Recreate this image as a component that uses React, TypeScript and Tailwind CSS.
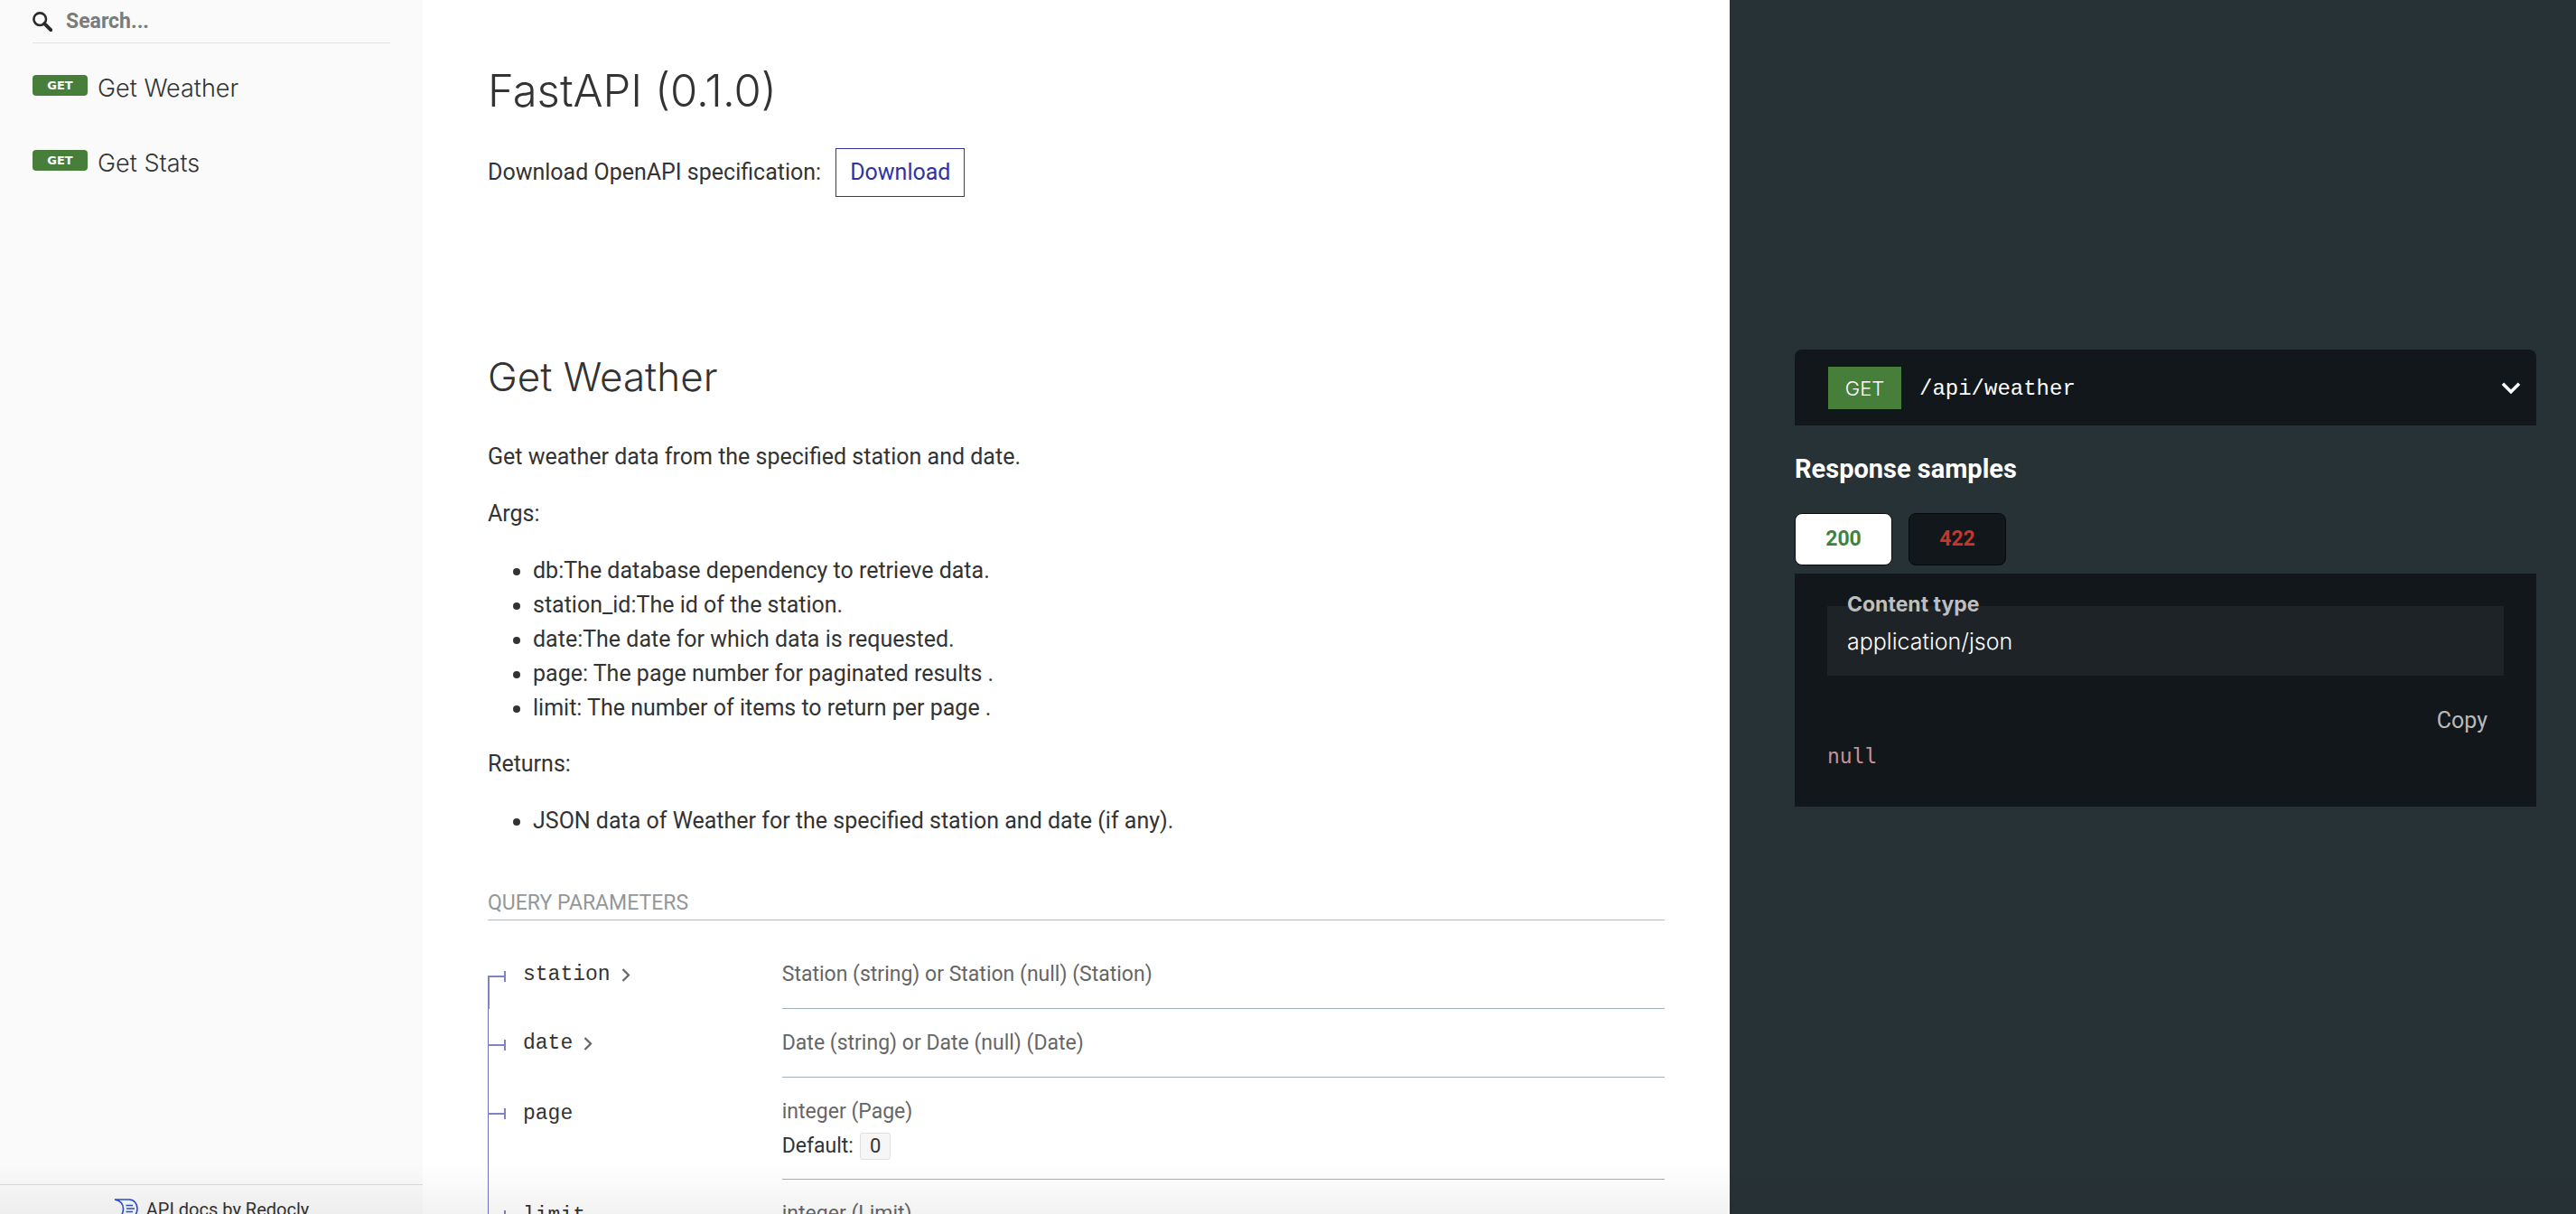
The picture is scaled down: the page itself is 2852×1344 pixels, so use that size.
import type { ReactNode } from "react";

const operations = ["Get Weather", "Get Stats"];

const args = [
  "db:The database dependency to retrieve data.",
  "station_id:The id of the station.",
  "date:The date for which data is requested.",
  "page: The page number for paginated results .",
  "limit: The number of items to return per page .",
];

type Param = { name: string; type: string; expandable?: boolean; value?: string };

const params: Param[] = [
  { name: "station", type: "Station (string) or Station (null) (Station)", expandable: true },
  { name: "date", type: "Date (string) or Date (null) (Date)", expandable: true },
  { name: "page", type: "integer (Page)", value: "0" },
  { name: "limit", type: "integer (Limit)", value: "100" },
];

function SearchIcon() {
  return (
    <svg viewBox="0 0 22 22" className="size-[22px] shrink-0" fill="none" stroke="#2b2b2b" aria-hidden="true">
      <circle cx="8.2" cy="8.2" r="6.8" strokeWidth="2.6" />
      <path d="M13.2 13.2 20.2 20.2" strokeWidth="4" strokeLinecap="round" />
    </svg>
  );
}

function RedoclyLogo() {
  return (
    <svg viewBox="0 0 27 24" className="h-6 w-[27px] shrink-0" fill="none" stroke="#2b4fd6" strokeWidth="1.6" aria-hidden="true">
      <path d="M1 1H17C22.500 1 26 5.500 26 11S22.500 22 17 22H4C8 20 10.500 16 10.500 11.500 10.500 6 7 2 1 1Z" />
      <path d="M13.500 7.500H21M14 11H23M13.500 14.500H21" />
    </svg>
  );
}

function Sidebar() {
  return (
    <aside className="flex min-h-0 flex-col bg-[#fafafa]">
      <label className="mx-9 flex h-12 items-center gap-[15px] border-b border-[#e1e1e1]">
        <SearchIcon />
        <input
          type="text"
          aria-label="Search"
          placeholder="Search..."
          className="min-w-0 flex-1 bg-transparent pt-[2px] text-[23px] font-bold text-[#333] outline-none placeholder:text-[#7b7b7b] placeholder:opacity-100"
        />
      </label>
      <nav className="flex flex-col gap-[45px] px-9 pt-[35px]">
        {operations.map((name) => (
          <a key={name} href="#operation" className="flex h-[38px] items-start gap-[11px] text-[#333]">
            <span className="flex h-[23px] w-[61px] shrink-0 items-center justify-center rounded bg-[#477f3a] font-['DejaVu_Sans',sans-serif] text-[13px] font-bold text-white">
              GET
            </span>
            <span className="font-[Inter,sans-serif] text-[27px] leading-[30px] font-light">{name}</span>
          </a>
        ))}
      </nav>
      <footer className="mt-auto h-[33px] overflow-hidden border-t border-[#dcdcdc] pt-[15px]">
        <a href="#redocly" className="flex items-start justify-center gap-[9px] text-[20px] leading-6 text-[#333]">
          <RedoclyLogo />
          API docs by Redocly
        </a>
      </footer>
    </aside>
  );
}

function Bullets({ items }: { items: string[] }) {
  return (
    <ul className="mb-6 list-disc pl-[50px]">
      {items.map((item) => (
        <li key={item}>{item}</li>
      ))}
    </ul>
  );
}

function Chevron({ className, children }: { className: string; children: ReactNode }) {
  return (
    <svg viewBox="0 0 20 20" className={className} fill="none" stroke="currentColor" aria-hidden="true">
      {children}
    </svg>
  );
}

function ParamRow({ param, first }: { param: Param; first: boolean }) {
  return (
    <tr className="align-top">
      <th scope="row" className="relative w-1/4 pt-[19px] pl-[39px] text-left font-normal">
        <span className={first ? "absolute top-[39px] bottom-0 left-0 w-[2px] bg-[#8182c1]" : "absolute inset-y-0 left-0 w-px bg-[#7375ba]"} />
        <span className="absolute top-[39px] left-0 h-[2px] w-[20px] bg-[#8182c1]" />
        <span className="absolute top-[34px] left-[18px] h-3 w-[2px] bg-[#8182c1]" />
        {param.expandable ? (
          <button type="button" className="flex items-center gap-2 font-['Liberation_Mono',monospace] text-[23px] leading-[38px] text-[#333]">
            {param.name}
            <Chevron className="size-[20px] text-[#666]">
              <path d="M5.500 4 12 10.500 5.500 17" strokeWidth="2.2" />
            </Chevron>
          </button>
        ) : (
          <span className="font-['Liberation_Mono',monospace] text-[23px] leading-[38px] text-[#333]">{param.name}</span>
        )}
      </th>
      <td className="border-b border-[#9fb1be] pt-[19px] pb-[18px] text-[23px] leading-[38px]">
        <div className="text-[#666]">{param.type}</div>
        {param.value && (
          <div className="flex h-[37px] items-center gap-[7px]">
            Default:
            <span className="flex h-[30px] items-center rounded-[3px] border border-[#e0e0e0] bg-[#f6f6f6] px-[10px] text-[22px]">
              {param.value}
            </span>
          </div>
        )}
      </td>
    </tr>
  );
}

function Content() {
  return (
    <main className="min-h-0 overflow-hidden bg-white px-[72px] text-[25px] leading-[38px] text-[#333]">
      <h1 className="pt-[70px] font-[Inter,sans-serif] text-[49px] leading-[62px] font-light">FastAPI (0.1.0)</h1>
      <p className="mt-8 flex items-center gap-4">
        Download OpenAPI specification:
        <a href="#openapi.json" className="border border-[#32329f] px-[15px] py-[7px] text-[#32329f]">
          Download
        </a>
      </p>
      <h2 className="mt-[171px] font-[Inter,sans-serif] text-[44px] leading-[56px] font-light">Get Weather</h2>
      <p className="mt-[42px] mb-[25px]">Get weather data from the specified station and date.</p>
      <p className="mb-[25px]">Args:</p>
      <Bullets items={args} />
      <p className="mb-[25px]">Returns:</p>
      <Bullets items={["JSON data of Weather for the specified station and date (if any)."]} />
      <h5 className="mt-[54px] border-b border-[#b9bdbf] text-[23px] leading-[36px] text-[#939799] uppercase">
        Query Parameters
      </h5>
      <table className="mt-[22px] w-full border-separate border-spacing-0">
        <tbody>
          {params.map((param, i) => (
            <ParamRow key={param.name} param={param} first={i === 0} />
          ))}
        </tbody>
      </table>
    </main>
  );
}

function Samples() {
  return (
    <section className="min-h-0 overflow-hidden bg-[#273237] pt-[387px] pr-11 pl-[72px] text-white">
      <button type="button" className="flex h-[84px] w-full items-center rounded-t-lg bg-[#11171a] pr-4 pl-[37px] text-left">
        <span className="flex h-[47px] w-[81px] items-center justify-center bg-[#477f3a] pt-[2px] font-[Inter,sans-serif] text-[22px] font-light">
          GET
        </span>
        <span className="ml-5 flex-1 pt-1 font-['Liberation_Mono',monospace] text-[24px]">/api/weather</span>
        <Chevron className="size-6">
          <path d="M2.500 6.500 10 14 17.500 6.500" strokeWidth="3" />
        </Chevron>
      </button>
      <h3 className="mt-7 text-[29px] leading-10 font-bold">Response samples</h3>
      <div role="tablist" className="mt-[29px] flex gap-[18px] text-[23px] font-bold">
        <button type="button" role="tab" aria-selected="true" className="h-[58px] w-[108px] rounded-lg border border-[#07090b] bg-white text-[#3f843a]">
          200
        </button>
        <button type="button" role="tab" aria-selected="false" className="h-[58px] w-[108px] rounded-lg border border-[#07090b] bg-[#11171a] text-[#c5362b]">
          422
        </button>
      </div>
      <div className="mt-[9px] bg-[#11171a] px-9 pt-9 pb-9">
        <div className="flex h-[77px] flex-col bg-[#1d2326] px-[22px] font-[Inter,sans-serif]">
          <div className="-mt-4 text-[23px] leading-7 font-bold text-[#bcbebf]">Content type</div>
          <div className="mt-[9px] text-[25px] leading-9 font-light">application/json</div>
        </div>
        <div className="mt-[31px] flex justify-end pr-[18px]">
          <button type="button" className="text-[25px] leading-[38px] text-[#b8babb]">Copy</button>
        </div>
        <pre className="font-['DejaVu_Sans_Mono',monospace] text-[23px] leading-10 text-[#c78f97]">null</pre>
      </div>
    </section>
  );
}

export default function App() {
  return (
    <div className="relative grid h-screen grid-cols-[468px_minmax(0,1447fr)_minmax(0,937fr)] grid-rows-[minmax(0,1fr)] overflow-hidden font-[Roboto,sans-serif]">
      <Sidebar />
      <Content />
      <Samples />
      <div className="pointer-events-none absolute inset-x-0 bottom-0 h-14 bg-linear-to-b from-transparent to-black/5" />
    </div>
  );
}
